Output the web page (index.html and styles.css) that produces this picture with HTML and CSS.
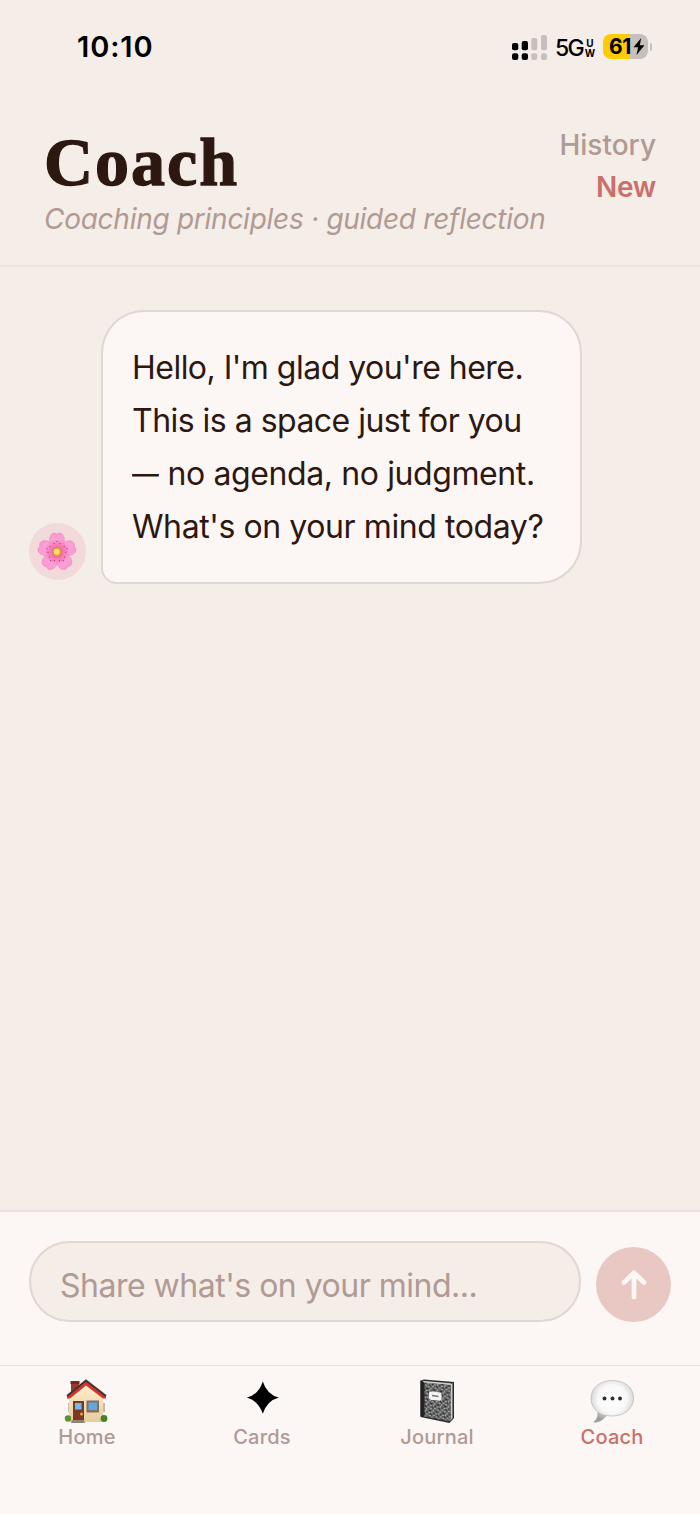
FILE: index.html
```html
<!DOCTYPE html>
<html lang="en">
<head>
<meta charset="utf-8">
<title>Coach</title>
<link rel="stylesheet" href="styles.css">
</head>
<body>
<div class="app">
  <div class="status">
    <span class="time">10:10</span>
    <div class="indicators">
      <svg class="signal" width="36" height="26" viewBox="0 0 36 26">
        <g fill="#000"><rect x="0" y="8" width="6.3" height="7.3" rx="2"/><rect x="0" y="18.3" width="6.3" height="6.7" rx="2"/><rect x="9.7" y="6" width="6.3" height="9.3" rx="2"/><rect x="9.7" y="18.3" width="6.3" height="6.7" rx="2"/></g>
        <g fill="#c6bfbb"><rect x="19.3" y="3" width="6" height="12.3" rx="2"/><rect x="19.3" y="18.3" width="6" height="6.7" rx="2"/><rect x="29" y="0" width="6" height="15.3" rx="2"/><rect x="29" y="18.3" width="6" height="6.7" rx="2"/></g>
      </svg>
      <span class="network">5G</span>
      <span class="band"><span>U</span><span>W</span></span>
      <div class="battery">
        <span class="level">61</span>
        <svg width="12" height="17" viewBox="0 0 12 17"><path d="M8.2 0 .5 9.3h4.6L3.500 17l8-9.800H6.800z" fill="#000"/></svg>
      </div>
      <span class="battery-cap"></span>
    </div>
  </div>

  <header class="header">
    <div>
      <h1 class="title">Coach</h1>
      <p class="subtitle">Coaching principles · guided reflection</p>
    </div>
    <div class="actions"><a class="history">History</a><a class="new">New</a></div>
  </header>

  <main class="chat">
    <div class="avatar">
      <svg width="42" height="42" viewBox="-21 -21 42 42">
        <defs>
          <radialGradient id="petal" gradientUnits="userSpaceOnUse" cx="0" cy="0" r="20">
            <stop offset="0" stop-color="#d93b78"/><stop offset=".3" stop-color="#f277b0"/><stop offset=".65" stop-color="#fba0d8"/><stop offset="1" stop-color="#f897d0"/>
          </radialGradient>
          <g id="leaf">
            <path d="M0 0C-3-4-8.500-8-7.300-14C-6.500-18-3.500-20-0.800-18.500Q0-17.500.8-18.500C3.500-20 6.500-18 7.300-14C8.500-8 3-4 0 0Z" fill="url(#petal)" stroke="#ee82bb" stroke-width=".5"/>
            <circle cx="-3" cy="-8.500" r=".6" fill="#9d2d5e"/><circle cx="3" cy="-8.500" r=".6" fill="#9d2d5e"/><circle cx="0" cy="-10.500" r=".6" fill="#9d2d5e"/>
          </g>
        </defs>
        <use href="#leaf"/><use href="#leaf" transform="rotate(72)"/><use href="#leaf" transform="rotate(144)"/><use href="#leaf" transform="rotate(216)"/><use href="#leaf" transform="rotate(288)"/>
        <circle r="4.200" fill="#e0a12f"/><circle r="3" cx="-.3" cy="-.3" fill="#f8df58"/>
      </svg>
    </div>
    <div class="bubble">
      <span class="line l1">Hello, I'm glad you're here.</span>
      <span class="line l2">This is a space just for you</span>
      <span class="line l3"><span class="dash">—</span> no agenda, no judgment.</span>
      <span class="line l4">What's on your mind today?</span>
    </div>
  </main>

  <section class="composer">
    <div class="field">Share what's on your mind...</div>
    <div class="send">
      <svg width="26" height="30" viewBox="0 0 26 30"><path d="M13 27V3M3 12.500 13 2.700l10 9.800" fill="none" stroke="#fcf6f4" stroke-width="4.800" stroke-linecap="round" stroke-linejoin="round"/></svg>
    </div>
  </section>

  <nav class="tabs">
    <div class="tab">
      <svg width="46" height="46" viewBox="0 0 46 46">
        <defs><linearGradient id="wall" x2="0" y2="1"><stop stop-color="#fff0cc"/><stop offset="1" stop-color="#e6cda0"/></linearGradient></defs>
        <path d="M7 3h8v14H7z" fill="#99382b"/><path d="M6.500 2h9v3h-9z" fill="#6f2a24"/>
        <path d="M4 24h3v9H4zM38 24h3v9h-3z" fill="#c8b9a5"/>
        <path d="M5 17 22 4l17 13v26H5z" fill="url(#wall)"/>
        <path d="M22 1.500 42 17v2.500h-3L22 6.500 6 19.500H3V17z" fill="#d5332c"/><path d="M3 17 22 1.500l20 15.500" fill="none" stroke="#3d3435" stroke-width="2"/>
        <rect x="9" y="22" width="11" height="20" fill="#7c3825"/><rect x="11" y="24" width="6.500" height="6.500" fill="#70bdeb"/><circle cx="17.500" cy="35" r="1.500" fill="#e8a53c"/>
        <rect x="22.500" y="21.500" width="12.500" height="12" fill="#8a6d60"/><rect x="24.500" y="23.500" width="8.500" height="7.500" fill="#62aadd"/>
        <circle cx="4" cy="39.500" r="3.200" fill="#5b942d"/><circle cx="40" cy="39.500" r="3.400" fill="#47822b"/>
        <path d="M8 41h12l1 3H7z" fill="#958376"/>
      </svg>
      <span class="label">Home</span>
    </div>
    <div class="tab">
      <svg width="46" height="46" viewBox="0 0 46 46"><path d="M23.800 2.500Q28 15.800 39.800 18.600Q28 21.800 23.800 34.800Q19.500 21.800 7.800 18.600Q19.500 15.800 23.800 2.500Z" fill="#000"/></svg>
      <span class="label">Cards</span>
    </div>
    <div class="tab">
      <svg width="46" height="46" viewBox="0 0 46 46">
        <defs><pattern id="marble" width="7" height="7" patternUnits="userSpaceOnUse" patternTransform="rotate(12)"><rect width="7" height="7" fill="#626262"/><path d="M0 1h2v1H0zM3 0h1v2H3zM5 3h2v1H5zM1 4h2v1H1zM4 5h1v2H4z" fill="#aaa"/><path d="M2 2h1v1H2zM5 1h1v1H5zM0 6h2v1H0zM3 3h1v1H3z" fill="#242424"/></pattern></defs>
        <path d="M6.500 1.500 10 .5l30 2.500v36l-4.500 5L6.500 38z" fill="#292929"/>
        <path d="M8 1.700 37 4.200l-.5 2L10 4zM36.500 5.500l2-1.500v35l-2 2.500z" fill="#ccc"/>
        <path d="M10 3.500 36.500 6v36.500L10 37.500z" fill="url(#marble)"/><path d="M6.500 1.500 10.500 3.500v34l-4-.5z" fill="#222"/>
        <path d="M15 14.500c0-2 1.500-2 3-2l6.500.7c2 .3 3 1 3 3v3c0 2-1 2.500-3 2.200L18 21c-2 0-3-1-3-2.500z" fill="#f4f4f4"/><path d="M18 16.500l6.500 1" stroke="#777" stroke-width="1.500"/>
      </svg>
      <span class="label">Journal</span>
    </div>
    <div class="tab active">
      <svg width="46" height="46" viewBox="0 0 46 46">
        <defs><radialGradient id="speech" cx=".5" cy=".44" r=".56"><stop stop-color="#fff"/><stop offset=".6" stop-color="#f8f8f8"/><stop offset=".85" stop-color="#dedede"/><stop offset="1" stop-color="#a8a8a8"/></radialGradient></defs>
        <path d="M23.500 1.500C36 1.500 44.500 8.500 44.500 19S36 37 23.500 37Q20.500 37 17.500 36.400C14.500 40.500 10.500 43 5.500 43.500C4.700 43.500 4.700 42.800 5.300 42.300C8 40 9 37 8.800 33C4.500 29.500 2 25 2 19.500C2 8.500 11 1.500 23.500 1.500Z" fill="url(#speech)" stroke="#b2b2b2" stroke-width=".6"/>
        <path d="M17.500 36.400C14.500 40.500 10.500 43 5.500 43.500C9 40.500 9.500 37 8.800 33Q13 35.500 17.500 36.400Z" fill="#8f8f8f" opacity=".5"/>
        <g fill="#303030"><circle cx="15.500" cy="19.500" r="2"/><circle cx="23.500" cy="19.500" r="2"/><circle cx="31" cy="19.500" r="2"/></g>
      </svg>
      <span class="label">Coach</span>
    </div>
  </nav>
</div>
</body>
</html>
```

FILE: styles.css
```css
* { box-sizing: border-box; }
body { margin: 0; background: #f5ede8; font-family: Inter, "Liberation Sans", sans-serif; color: #2c1810; }
.app { width: 700px; height: 1514px; display: flex; flex-direction: column; overflow: hidden; }
svg { display: block; flex: none; }

.status { height: 95px; display: flex; justify-content: space-between; padding: 0 48px 0 77px; color: #000; }
.time { font-size: 29px; font-weight: 600; line-height: 36px; padding-top: 29px; letter-spacing: .9px; }
.indicators { display: flex; align-items: flex-start; padding-top: 35px; }
.signal { margin-left: 1px; }
.network { font-size: 23px; font-weight: 500; line-height: 26px; margin: 0 0 0 7px; width: 30px; letter-spacing: -1.6px; }
.band { display: flex; flex-direction: column; width: 10px; align-items: center; font-size: 10px; font-weight: 700; line-height: 10px; margin-top: 3px; }
.battery { width: 45px; height: 25px; margin: -1px 0 0 8px; border-radius: 8px; background: linear-gradient(90deg, #ffcc02 61%, #c6bfbb 61%); display: flex; align-items: center; padding-left: 6px; }
.level { font-size: 21px; font-weight: 700; line-height: 25px; width: 24px; letter-spacing: -.5px; }
.battery-cap { width: 2px; height: 8px; margin: 8px 0 0 2px; border-radius: 0 3px 3px 0; background: #c6bfbb; }

.header { height: 172px; display: flex; justify-content: space-between; align-items: flex-start; padding: 28px 44px 0; border-bottom: 2px solid #eee4df; }
.title { margin: 0; font: 700 68px/78px "Liberation Serif", serif; letter-spacing: 2px; -webkit-text-stroke: 1.3px #2c1810; }
.subtitle { margin: 0; font-size: 28px; font-style: italic; line-height: 36px; color: #b09a94; white-space: nowrap; letter-spacing: -.27px; }
.actions { display: flex; flex-direction: column; align-items: flex-end; gap: 6px; padding-top: 4px; font-size: 28px; line-height: 36px; font-weight: 500; color: #b09a94; }
.new { color: #c97068; font-weight: 600; letter-spacing: -.3px; }

.chat { flex: 1; display: flex; align-items: flex-start; gap: 15px; padding: 43px 29px; }
.avatar { width: 57px; height: 57px; margin-top: 213px; padding-right: 2px; border-radius: 50%; background: #f2dada; display: grid; place-items: center; }
.bubble { width: 481px; height: 274px; border: 2px solid #e2d6d0; border-radius: 43px 43px 43px 16px; background: #fcf6f4; padding: 29px 29px 0; font-size: 32px; line-height: 53px; }
.line { display: block; white-space: nowrap; }
.l1, .l2 { letter-spacing: -.52px; }
.l3 { letter-spacing: -.4px; }
.l4 { letter-spacing: -.41px; }
.dash { display: inline-block; width: 27px; transform: scaleX(.84); transform-origin: left; }

.composer { height: 155px; display: flex; gap: 15px; padding: 29px 29px 0; background: #fcf6f4; border-top: 2px solid #ebe0db; }
.field { width: 552px; height: 81px; border: 2px solid #e2d6d0; border-radius: 41px; background: #f5ede8; padding: 3px 29px 0; font-size: 32px; line-height: 80px; color: #b09a94; white-space: nowrap; letter-spacing: -.5px; }
.send { width: 75px; height: 75px; margin-top: 6px; border-radius: 50%; background: #e9c7c2; display: grid; place-items: center; }

.tabs { height: 149px; display: grid; grid-template-columns: repeat(4, 175px); background: #fcf6f4; border-top: 1px solid #ebe0db; }
.tab { display: flex; flex-direction: column; align-items: center; padding: 13px 2px 0 0; }
.label { font-size: 20px; line-height: 24px; font-weight: 500; color: #b09a94; letter-spacing: .2px; padding-left: 1px; }
.active .label { color: #c97068; }
```
